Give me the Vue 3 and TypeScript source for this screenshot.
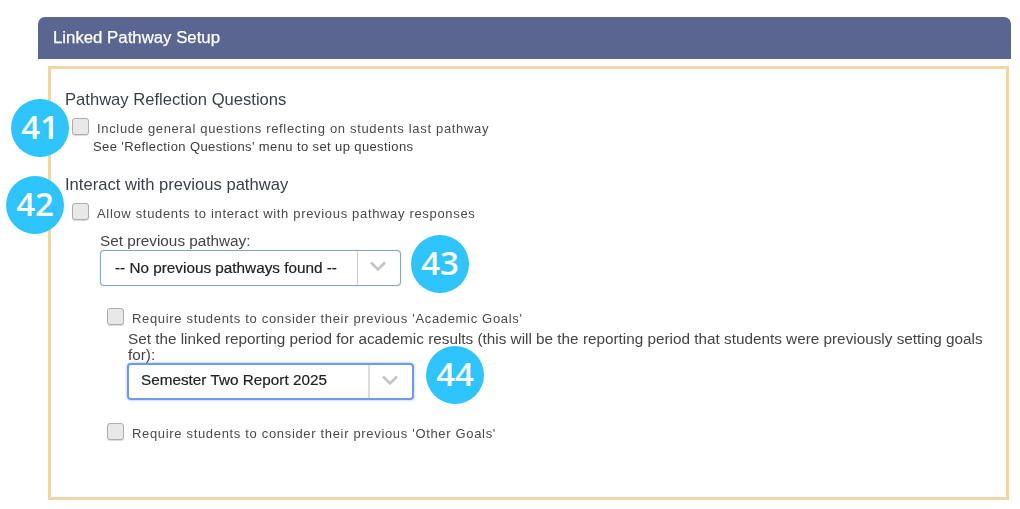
<template>
  <div class="page">
    <div class="sheet">
      <div class="panel-head">Linked Pathway Setup</div>
      <div class="panel-body">
        <h4 class="section-title">Pathway Reflection Questions</h4>
        <label class="check-row">
          <span class="check"></span>
          <span class="check-label">Include general questions reflecting on students last pathway</span>
        </label>
        <p class="hint">See 'Reflection Questions' menu to set up questions</p>

        <h4 class="section-title second">Interact with previous pathway</h4>
        <label class="check-row">
          <span class="check"></span>
          <span class="check-label">Allow students to interact with previous pathway responses</span>
        </label>

        <div class="previous">
          <div class="field-label">Set previous pathway:</div>
          <div class="select">
            <span class="select-value">-- No previous pathways found --</span>
            <span class="select-arrow">
              <svg width="18" height="12" viewBox="0 0 18 12"><path d="M2 2.5 L9 9.5 L16 2.5" /></svg>
            </span>
          </div>
        </div>

        <div class="goals">
          <label class="check-row">
            <span class="check"></span>
            <span class="check-label">Require students to consider their previous 'Academic Goals'</span>
          </label>
          <div class="linked">
            <div class="field-label">Set the linked reporting period for academic results (this will be the reporting period that students were previously setting goals for):</div>
            <div class="select focused">
              <span class="select-value">Semester Two Report 2025</span>
              <span class="select-arrow">
                <svg width="18" height="12" viewBox="0 0 18 12"><path d="M2 2.5 L9 9.5 L16 2.5" /></svg>
              </span>
            </div>
          </div>
          <label class="check-row other">
            <span class="check"></span>
            <span class="check-label">Require students to consider their previous 'Other Goals'</span>
          </label>
        </div>
      </div>
    </div>

    <span v-for="b in badges" :key="b.n" class="badge" :style="{ left: b.x + 'px', top: b.y + 'px' }">{{ b.n }}</span>
  </div>
</template>

<script setup lang="ts">
interface Badge {
  n: number;
  x: number;
  y: number;
}

// callouts sit on top of the screenshot
const badges: Badge[] = [
  { n: 41, x: 11, y: 99 },
  { n: 42, x: 6, y: 176 },
  { n: 43, x: 411, y: 235 },
  { n: 44, x: 426, y: 346 }
];
</script>

<style>
html, body {
  background: #fff;
}
</style>

<style scoped>
.page {
  position: relative;
  width: 1020px;
  height: 509px;
  overflow: hidden;
  font-family: "Liberation Sans", Arial, sans-serif;
  color: #333;
  background: #fff;
}
/* the source is an upscaled capture, so everything is a touch soft */
.sheet {
  padding: 17px 9px 0 38px;
  filter: blur(0.35px);
}
.panel-head {
  height: 42px;
  line-height: 41px;
  padding-left: 15px;
  background: #5a668f;
  color: #fff;
  font-size: 16.8px;
  -webkit-text-stroke: 0.25px #fff;
  border-radius: 7px 7px 0 0;
}
.panel-body {
  margin: 7px 2px 0 10px;
  height: 434px;
  box-sizing: border-box;
  border: 3px solid #eed6aa;
  padding: 20px 14px 0 14px;
}
.section-title {
  margin: 0;
  font-size: 16.6px;
  line-height: 21px;
  font-weight: 400;
  color: #3a3f4a;
}
.section-title.second {
  margin-top: 19px;
}
.check-row {
  display: flex;
  align-items: flex-start;
  margin-left: 7px;
  margin-top: 8px;
}
.check {
  width: 17px;
  height: 17px;
  flex: none;
  box-sizing: border-box;
  border: 1px solid #adadad;
  border-radius: 3px;
  background: #e8e8e8;
  box-shadow: 0 1px 1px rgba(0, 0, 0, 0.15);
}
.check-label {
  margin: 2px 0 0 8px;
  font-size: 13px;
  line-height: 17px;
  letter-spacing: 0.67px;
  color: #4a4a4a;
}
.hint {
  margin: 2px 0 0 28px;
  font-size: 13px;
  letter-spacing: 0.39px;
  line-height: 16px;
  color: #3c3c3c;
}
.previous {
  margin: 11px 0 0 35px;
}
.field-label {
  font-size: 15.3px;
  line-height: 16px;
  color: #444;
}
.select {
  display: flex;
  align-items: center;
  width: 301px;
  height: 36px;
  box-sizing: border-box;
  border: 1px solid #8fa5bd;
  border-radius: 4px;
  background: #fff;
  margin-top: 1px;
  box-shadow: 0 0 1px #8fa5bd;
}
.select-value {
  flex: 1;
  padding-left: 14px;
  font-size: 15.3px;
  color: #222;
  -webkit-text-stroke: 0.2px #222;
}
.select-arrow {
  width: 43px;
  height: 100%;
  flex: none;
  display: flex;
  align-items: center;
  justify-content: center;
  border-left: 1px solid #ccc;
  box-sizing: border-box;
  padding: 0 2px 4px 0;
}
.select-arrow path {
  fill: none;
  stroke: #c4c4c4;
  stroke-width: 2.6;
}
.goals {
  margin: 22px 0 0 35px;
}
.goals .check-row {
  margin-top: 0;
}
.linked {
  margin: 4px 0 0 28px;
}
.select.focused {
  width: 287px;
  height: 37px;
  margin: 0 0 0 -1px;
  border: 2px solid #6d9be8;
  box-shadow: 0 0 3px rgba(90, 140, 230, 0.6);
}
.select.focused .select-value {
  padding: 0 0 4px 12px;
}
.select.focused .select-arrow {
  width: 44px;
  border-left: 2px solid #ddd;
}
.goals .check-row.other {
  margin-top: 23px;
}
.badge {
  position: absolute;
  width: 58px;
  height: 58px;
  padding-bottom: 3px;
  box-sizing: border-box;
  border-radius: 50%;
  background: #2ec5ff;
  color: #fff;
  display: flex;
  align-items: center;
  justify-content: center;
  font-family: "Open Sans", sans-serif;
  font-size: 33px;
  font-weight: 600;
}
</style>
